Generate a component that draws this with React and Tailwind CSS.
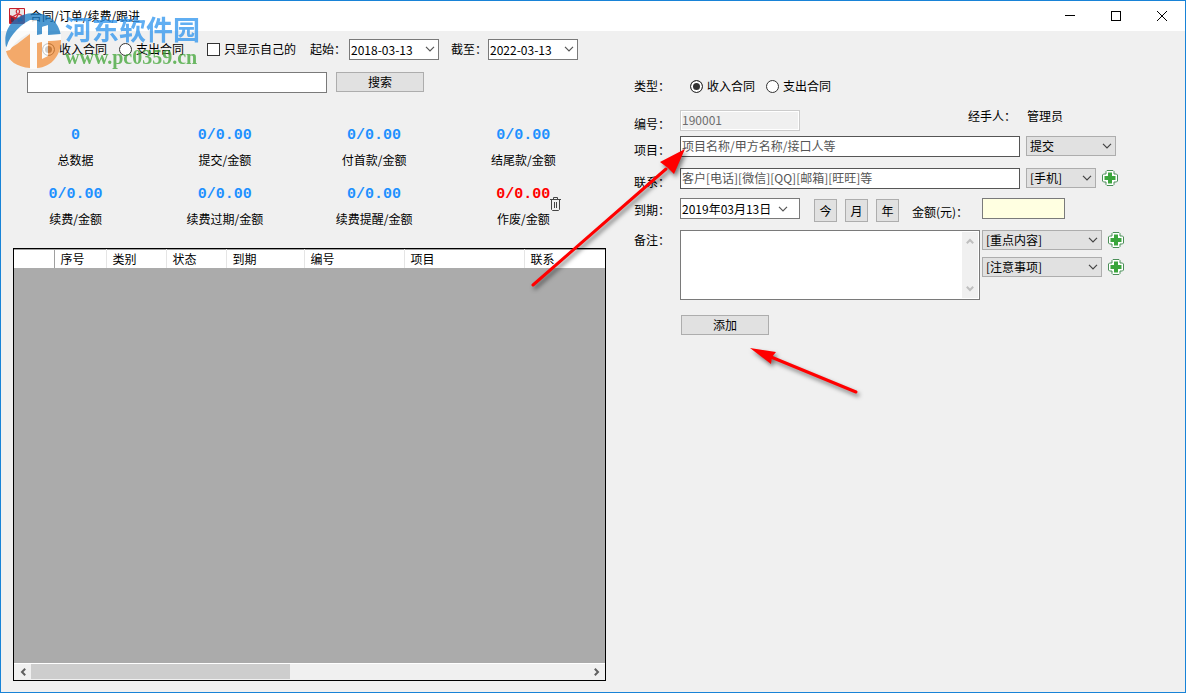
import React from 'react';
import { clsx } from 'clsx';

const stats = [
  { value: '0', label: '总数据' },
  { value: '0/0.00', label: '提交/金额' },
  { value: '0/0.00', label: '付首款/金额' },
  { value: '0/0.00', label: '结尾款/金额' },
  { value: '0/0.00', label: '续费/金额' },
  { value: '0/0.00', label: '续费过期/金额' },
  { value: '0/0.00', label: '续费提醒/金额' },
  { value: '0/0.00', label: '作废/金额', danger: true }
];

const columns = [
  { label: '序号', width: 'w-[52px]' },
  { label: '类别', width: 'w-[60px]' },
  { label: '状态', width: 'w-[60px]' },
  { label: '到期', width: 'w-[78px]' },
  { label: '编号', width: 'w-[100px]' },
  { label: '项目', width: 'w-[120px]' },
  { label: '联系', width: '' }
];

const Chevron = ({ className }) => (
  <svg viewBox="0 0 10 6" className={clsx('h-1.5 w-2.5', className)} fill="none" stroke="currentColor">
    <path d="M1 0.8 L5 4.8 L9 0.8" strokeWidth="1.2" />
  </svg>
);

const ScrollArrow = ({ className }) => (
  <svg viewBox="0 0 8 6" className={clsx('h-1.5 w-2', className)} fill="none" stroke="currentColor">
    <path d="M0.8 0.8 L4 4 L7.2 0.8" strokeWidth="2" />
  </svg>
);

const Radio = ({ name, label, defaultChecked }) => (
  <label className="flex items-center gap-1">
    <input
      type="radio"
      name={name}
      defaultChecked={defaultChecked}
      className="h-[13px] w-[13px] appearance-none rounded-full border border-[#333333] bg-white checked:bg-[#333333] checked:shadow-[inset_0_0_0_2px_white]"
    />
    <span>{label}</span>
  </label>
);

const DateBox = ({ id, label, value, className }) => (
  <div className={clsx('flex h-[21px] items-center border border-[#7a7a7a] bg-white', className)}>
    <input id={id} type="text" aria-label={label} defaultValue={value} className="h-full min-w-0 flex-1 pl-px outline-none" />
    <button type="button" aria-label="选择日期" className="flex w-4 shrink-0 justify-center text-[#555555]">
      <Chevron />
    </button>
  </div>
);

const Select = ({ label, option, className }) => (
  <div className={clsx('relative h-5', className)}>
    <select aria-label={label} className="h-full w-full appearance-none border border-[#adadad] bg-[#e1e1e1] pl-[3px] leading-4 outline-none">
      <option>{option}</option>
    </select>
    <Chevron className="pointer-events-none absolute top-[7px] right-1 text-[#444444]" />
  </div>
);

const AddButton = ({ label }) => (
  <button type="button" aria-label={label} className="h-4 w-4 shrink-0">
    <svg viewBox="0 0 16 16" className="h-4 w-4">
      <path d="M5 0.5 H11 L12 1.5 V4 H14.5 L15.5 5 V11 L14.5 12 H12 V14.5 L11 15.5 H5 L4 14.5 V12 H1.5 L0.5 11 V5 L1.5 4 H4 V1.5 Z" fill="white" stroke="#4b8f58" />
      <path d="M6 2.5 H10 V6 H13.5 V10 H10 V13.5 H6 V10 H2.5 V6 H6 Z" fill="#3aa53c" />
    </svg>
  </button>
);

const Button = ({ children, className }) => (
  <button type="button" className={clsx('border border-[#adadad] bg-[#e1e1e1] leading-4', className)}>
    {children}
  </button>
);

const FormRow = ({ label, htmlFor, className, labelClass = 'pt-1', children }) => (
  <div className={clsx('flex items-start', className)}>
    <label htmlFor={htmlFor} className={clsx('w-[46px] shrink-0 leading-5', labelClass)}>{label}</label>
    {children}
  </div>
);

const TitleBar = () => (
  <header className="flex h-[30px] shrink-0 items-center bg-white pl-2">
    <svg viewBox="0 0 16 16" className="h-4 w-4">
      <rect width="16" height="16" rx="1" fill="#c41e2b" />
      <path d="M1 1 H15 V7 L12 8 L10 10 L6 9 L1 7 Z" fill="#ece4e4" />
      <path d="M8.5 6 C6.5 4 7 1.5 9 1.5 C11 1.5 11 4 9.5 6 L7 10 M9.5 6 L13 7.5 M8.5 6 L4 8.5" fill="none" stroke="#d22734" strokeWidth="1.2" />
      <path d="M2 9 L5 10.5 V14 H2 Z M8 11 L12 9.5 L14 13 L9 14 Z" fill="#5a2a4a" />
    </svg>
    <h1 className="ml-[5px] flex-1 leading-5">合同/订单/续费/跟进</h1>
    <button type="button" aria-label="最小化" className="flex h-full w-[46px] items-center justify-center">
      <svg viewBox="0 0 10 10" className="h-2.5 w-2.5"><path d="M0 4.5 H10" stroke="black" /></svg>
    </button>
    <button type="button" aria-label="最大化" className="flex h-full w-[46px] items-center justify-center">
      <svg viewBox="0 0 10 10" className="h-2.5 w-2.5"><rect x="0.5" y="0.5" width="9" height="9" fill="none" stroke="black" /></svg>
    </button>
    <button type="button" aria-label="关闭" className="flex h-full w-[46px] items-center justify-center">
      <svg viewBox="0 0 10 10" className="h-2.5 w-2.5"><path d="M0 0 L10 10 M10 0 L0 10" stroke="black" /></svg>
    </button>
  </header>
);

const Filters = () => (
  <>
    <div className="flex h-[22px] items-center pl-[41px]">
      <Radio name="filterType" label="收入合同" defaultChecked />
      <div className="ml-3"><Radio name="filterType" label="支出合同" /></div>
      <label className="ml-[23px] flex items-center gap-1">
        <input type="checkbox" className="h-[13px] w-[13px] appearance-none border border-[#333333] bg-white" />
        <span>只显示自己的</span>
      </label>
      <label htmlFor="startDate" className="ml-3.5 w-[39px]">起始：</label>
      <DateBox id="startDate" label="起始" value="2018-03-13" className="w-[90px]" />
      <label htmlFor="endDate" className="ml-3 w-[37px]">截至：</label>
      <DateBox id="endDate" label="截至" value="2022-03-13" className="w-[90px]" />
    </div>
    <div className="mt-3 flex items-start gap-[9px] pl-[26px]">
      <input type="text" aria-label="搜索" className="h-[21px] w-[300px] border border-[#7a7a7a] bg-white px-1 outline-none" />
      <Button className="h-5 w-[88px]">搜索</Button>
    </div>
  </>
);

const Stats = () => (
  <div className="mt-[33px] grid grid-cols-4 gap-y-[15px] pr-2">
    {stats.map((item) => (
      <div key={item.label} className="flex flex-col items-center gap-1">
        <div
          className={clsx(
            'relative font-["Liberation_Mono",monospace] text-[15px] leading-5 font-bold',
            item.danger ? 'text-[#ff0000]' : 'text-[#1e90ff]'
          )}
        >
          {item.value}
          {item.danger && (
            <button type="button" aria-label="清空作废" className="absolute top-3 left-full">
              <svg viewBox="0 0 11 14" className="h-3.5 w-[11px]" fill="none" stroke="#444444">
                <path d="M0 2.5 H11 M3.5 2 V0.5 H7.5 V2 M1.5 3 V12.5 L2.5 13.5 H8.5 L9.5 12.5 V3 M4.5 5 V11 M6.5 5 V11" />
              </svg>
            </button>
          )}
        </div>
        <div className="leading-5">{item.label}</div>
      </div>
    ))}
  </div>
);

const DataGrid = () => (
  <div className="mt-[19px] ml-3 flex flex-1 flex-col border border-black bg-[#ababab]">
    <table className="w-full table-fixed border-collapse border-t border-[#a0a0a0] bg-white">
      <thead>
        <tr className="h-[18px]">
          <th aria-label="行" className="w-10 border-r border-[#a0a0a0]" />
          {columns.map((col) => (
            <th key={col.label} className={clsx('border-r border-[#e5e5e5] pl-1.5 text-left leading-[18px] font-normal last:border-r-0', col.width)}>
              {col.label}
            </th>
          ))}
        </tr>
      </thead>
    </table>
    <div className="flex-1" />
    <div className="flex h-[17px] items-stretch border-t border-white bg-[#f0f0f0] text-[#606060]">
      <button type="button" aria-label="向左" className="flex w-[17px] items-center justify-center">
        <ScrollArrow className="rotate-90" />
      </button>
      <div className="flex-1">
        <div className="h-[15px] w-[46.5%] bg-[#cdcdcd]" />
      </div>
      <button type="button" aria-label="向右" className="flex w-[17px] items-center justify-center">
        <ScrollArrow className="-rotate-90" />
      </button>
    </div>
  </div>
);

const ContractForm = () => (
  <form className="pt-[45px] pl-7">
    <FormRow label="类型：" labelClass="pt-0" className="h-[34px]">
      <div className="flex h-5 items-center gap-[11px] pl-2.5">
        <Radio name="type" label="收入合同" defaultChecked />
        <Radio name="type" label="支出合同" />
      </div>
    </FormRow>

    <FormRow label="编号：" htmlFor="code" className="h-[26px]">
      <input id="code" type="text" disabled defaultValue="190001" className="h-[21px] w-[120px] border border-[#cccccc] bg-[#f0f0f0] px-px pb-0.5 text-[#6d6d6d] shadow-[inset_0_0_0_1px_white]" />
      <div className="ml-[168px] w-[59px] leading-3">经手人：</div>
      <div className="leading-3">管理员</div>
    </FormRow>

    <FormRow label="项目：" htmlFor="project" className="h-8">
      <input id="project" type="text" placeholder="项目名称/甲方名称/接口人等" className="h-[21px] w-[340px] border border-[#555555] bg-white px-px pb-0.5 outline-none placeholder:text-[#555555]" />
      <Select label="状态" option="提交" className="ml-1.5 w-[90px]" />
    </FormRow>

    <FormRow label="联系：" htmlFor="contact" className="h-[30px]">
      <input id="contact" type="text" placeholder="客户[电话][微信][QQ][邮箱][旺旺]等" className="h-[21px] w-[340px] border border-[#555555] bg-white px-px pb-0.5 outline-none placeholder:text-[#555555]" />
      <div className="ml-1.5 flex items-center gap-1.5">
        <Select label="联系方式" option="[手机]" className="w-[70px]" />
        <AddButton label="添加联系方式" />
      </div>
    </FormRow>

    <FormRow label="到期：" htmlFor="expire" labelClass="pt-0.5" className="h-8">
      <DateBox id="expire" label="到期" value="2019年03月13日" className="w-[120px] pr-2" />
      <div className="ml-3.5 flex gap-2 pt-px">
        <Button className="h-[23px] w-[23px]">今</Button>
        <Button className="h-[23px] w-[23px]">月</Button>
        <Button className="h-[23px] w-[23px]">年</Button>
      </div>
      <label htmlFor="amount" className="ml-[13px] w-[70px] pt-1 leading-5">金额(元)：</label>
      <input id="amount" type="text" className="h-[21px] w-[83px] border border-[#7a7a7a] bg-[#ffffe1] px-1 outline-none" />
    </FormRow>

    <FormRow label="备注：" htmlFor="remark" labelClass="pt-0">
      <div className="flex h-[70px] w-[300px] border border-[#7a7a7a] bg-white p-px">
        <textarea id="remark" className="min-w-0 flex-1 resize-none px-px outline-none" />
        <div className="flex w-4 flex-col items-center justify-between bg-[#f0f0f0] py-1.5 text-[#bfbfbf]">
          <ScrollArrow className="rotate-180" />
          <ScrollArrow />
        </div>
      </div>
      <div className="ml-0.5 flex flex-col gap-[7px]">
        <div className="flex items-center gap-1.5">
          <Select label="重点内容" option="[重点内容]" className="w-[120px]" />
          <AddButton label="添加重点内容" />
        </div>
        <div className="flex items-center gap-1.5">
          <Select label="注意事项" option="[注意事项]" className="w-[120px]" />
          <AddButton label="添加注意事项" />
        </div>
      </div>
    </FormRow>

    <Button className="mt-[15px] ml-[47px] h-5 w-[88px]">添加</Button>
  </form>
);

// Site badge printed over the top left corner of the window
const Watermark = () => (
  <div className="pointer-events-none absolute top-2.5 left-1 flex items-start opacity-75">
    <svg viewBox="0 0 56 56" className="mt-0.5 h-14 w-14 shrink-0">
      <path d="M1 34 C-3 15 11 0 29 0 C44 0 54 9 56 23 L42 23 V13 L37 14 V22 L32 23 V8 L25 8 L10 28 Z" fill="#1377c2" />
      <path d="M1 38 L12 31 L25 21 V55 C12 54 3 48 1 38 Z M32 55 V29 L37 28 V45 L42 43 V28 L56 27 C56 42 47 54 32 55 Z" fill="#f5923e" />
      <path d="M1 38 C2 26 12 14 25 7 H32 V22 L37 21 V14 L43 12 V22 L56 21 V27 L43 28 V43 L37 46 V29 L32 30 V56 H25 V20 C17 23 9 30 5 37 Z" fill="white" />
    </svg>
    <div className="ml-1 whitespace-nowrap">
      <div className="font-['Noto_Sans_CJK_SC',sans-serif] text-[27px] leading-9 font-bold text-[#2b93ee]">河东软件园</div>
      <div className="font-['Liberation_Serif',serif] text-[20px] leading-5 font-bold text-[#3fa535]">www.pc0359.cn</div>
    </div>
  </div>
);

const Arrows = () => (
  <svg viewBox="0 0 340 270" className="pointer-events-none absolute top-[133px] left-[524px] h-[270px] w-[340px] drop-shadow-[2px_3px_2px_rgba(0,0,0,0.5)]">
    <path d="M8 151 L141 35" stroke="#ff0000" strokeWidth="3" strokeLinecap="round" />
    <path d="M160 15 L149 40 L143 34 L135 28 Z" fill="#ff0000" />
    <path d="M331 258 L246 223" stroke="#ff0000" strokeWidth="3" strokeLinecap="round" />
    <path d="M225 214 L251 218 L247 223 L246 230 Z" fill="#ff0000" />
  </svg>
);

const App = () => {
  return (
    <div className="relative flex min-h-screen flex-col border border-[#1883d7] bg-[#f0f0f0] font-['Noto_Sans_CJK_SC',sans-serif] text-xs text-black">
      <TitleBar />
      <main className="grid flex-1 grid-cols-[605fr_579fr]">
        <section className="flex flex-col pt-[7px] pb-[11px]">
          <Filters />
          <Stats />
          <DataGrid />
        </section>
        <ContractForm />
      </main>
      <Watermark />
      <Arrows />
    </div>
  );
};

export default App;
